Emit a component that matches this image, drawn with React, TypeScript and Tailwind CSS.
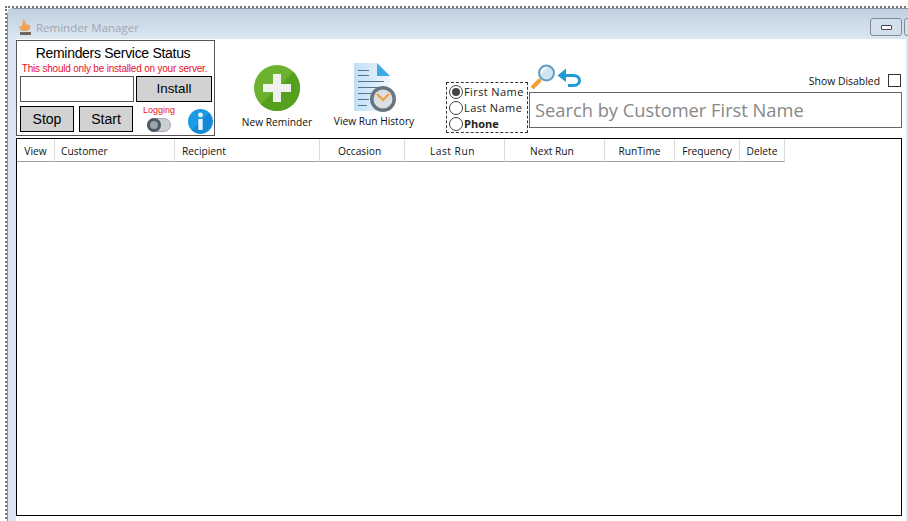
import React from "react";

const cols: [string, number, string][] = [
  ["View", 38, "text-center"],
  ["Customer", 120, "pl-[6px]"],
  ["Recipient", 145, "pl-[7px]"],
  ["Occasion", 85, "pl-[18px]"],
  ["Last Run", 100, "pl-[25px] tracking-[0.5px]"],
  ["Next Run", 100, "pl-[25px]"],
  ["RunTime", 70, "text-center"],
  ["Frequency", 65, "text-center"],
  ["Delete", 45, "text-center"],
];

function Radio({ label, checked, bold }: { label: string; checked?: boolean; bold?: boolean }) {
  return (
    <div className="flex items-center h-[16px]">
      <span className="w-[14px] h-[14px] rounded-full border border-[#444] bg-white flex items-center justify-center shrink-0">
        {checked && <span className="w-[8px] h-[8px] rounded-full bg-[#444]" />}
      </span>
      <span className={`ml-[1px] text-[11px] text-[#222] ${bold ? "font-bold tracking-normal" : "tracking-[0.4px]"}`}>{label}</span>
    </div>
  );
}

function Flame() {
  return (
    <svg width="16" height="18" viewBox="0 0 16 18" className="shrink-0">
      <path d="M6 1C8 2 9 4 8.500 6L13 7C14 9 13 12 10 13H5C3 12 2 10 2 8L4.500 8.500C5 6 6.500 4 6 1Z" fill="#f2a45f" />
      <rect x="3" y="14" width="11" height="3" fill="#6f665e" />
    </svg>
  );
}

function Plus() {
  return (
    <svg width="46" height="46" viewBox="0 0 46 46" className="block">
      <circle cx="23" cy="23" r="23" fill="#6cb22e" />
      <path d="M39.300 6.700A23 23 0 0 1 6.700 39.300Z" fill="#55a01f" />
      <path d="M19 9h8v10h10v8H27v10h-8V27H9v-8h10z" fill="#f0f1ee" />
    </svg>
  );
}

function History() {
  return (
    <svg width="44" height="49" viewBox="0 0 44 49" className="block">
      <defs>
        <linearGradient id="doc" x1="0" x2="1" y1="0" y2="0">
          <stop offset="0" stopColor="#bfe0f6" />
          <stop offset="1" stopColor="#eef6fc" />
        </linearGradient>
      </defs>
      <path d="M1 0H24L37 13V48H1Z" fill="url(#doc)" />
      <path d="M24 0L37 13H24Z" fill="#3fa9e6" />
      <g stroke="#5b7186" strokeWidth="1">
        <path d="M5 7.500H16M5 12.500H16M5 18.500H31M5 24.500H31M5 30.500H18M5 36.500H16M5 42.500H14" />
      </g>
      <circle cx="30" cy="36" r="13" fill="#68757f" />
      <circle cx="30" cy="36" r="9.500" fill="#dcdfe2" />
      <path d="M24 31L30 37L36 31" stroke="#f0a030" strokeWidth="2.200" fill="none" />
    </svg>
  );
}

function Magnifier() {
  return (
    <svg width="26" height="26" viewBox="0 0 26 26" className="block">
      <path d="M2 24L10.500 15.500" stroke="#f0a030" strokeWidth="4" />
      <circle cx="16.500" cy="9" r="7.500" fill="#cfe6f2" stroke="#5f9fbd" strokeWidth="2" />
      <path d="M12 8.500A5 5 0 0 1 16.500 4" stroke="#fff" strokeWidth="2" fill="none" />
    </svg>
  );
}

function Back() {
  return (
    <svg width="25" height="20" viewBox="0 0 25 20" className="block">
      <path d="M9 0.500L0.500 7.500L9 14Z" fill="#1f9ad6" />
      <path d="M7 7.500H16.500C24.500 7.500 24.500 17.500 16.500 17.500H11" stroke="#1f9ad6" strokeWidth="3" fill="none" />
    </svg>
  );
}

function Info() {
  return (
    <svg width="25" height="25" viewBox="0 0 25 25" className="block">
      <circle cx="12.500" cy="12.500" r="12.500" fill="#1b9be4" />
      <path d="M21.300 3.700A12.500 12.500 0 0 1 3.700 21.300Z" fill="#1488d4" />
      <circle cx="12.500" cy="6" r="2.400" fill="#e6f3fb" />
      <path d="M10.300 10H14.700V21H10.300Z" fill="#e6f3fb" />
    </svg>
  );
}

export default function App() {
  return (
    <div className="w-[908px] h-[521px] overflow-hidden bg-white pl-[5px] pt-[6px] font-['Liberation_Sans',sans-serif]">
      <div className="w-[920px] h-[520px] border-l-2 border-t-2 border-dotted border-[#777]">
        <div className="h-full rounded-tl-[7px] bg-[#dbe6f2] border-l border-t border-[#8a96a3]">
          {/* Title bar */}
          <div className="h-[30px] flex bg-gradient-to-b from-[#c0d0df] to-[#dce7f3] pl-[9px] pr-[13px]">
            <div className="mt-[9px]"><Flame /></div>
            <span className="ml-[3px] mt-[11px] text-[11.5px] leading-[16px] text-[#a0a7ae] font-['Open_Sans',sans-serif]">Reminder Manager</span>
            <div className="ml-auto mt-[9px] flex gap-[2px] items-start">
              <div className="w-[32px] h-[18px] rounded-[3px] border border-[#7e8c9a] bg-[#d3e0ec] flex items-center justify-center">
                <span className="w-[11px] h-[5px] border border-[#445] rounded-[1px] bg-white" />
              </div>
              <div className="w-[8px] h-[18px] rounded-l-[3px] border border-[#7e8c9a] bg-[#d3e0ec]" />
            </div>
          </div>
          {/* Client */}
          <div className="ml-[8px] w-[890px] h-[490px] bg-white">
            <div className="flex h-[99px]">
              {/* Service box */}
              <div className="mt-[1px] w-[199px] h-[96px] border border-[#555] px-[3px] shrink-0">
                <div className="text-center text-[14px] tracking-[-0.3px] leading-[16px] mt-[4px] mr-[5px] text-black whitespace-nowrap">Reminders Service Status</div>
                <div className="text-center text-[10px] tracking-[-0.2px] leading-[12px] mt-[2px] mr-[2px] text-[#e8102a] whitespace-nowrap">This should only be installed on your server.</div>
                <div className="flex mt-[1px] gap-[2px]">
                  <div className="w-[114px] h-[26px] border border-[#555] bg-white shrink-0" />
                  <div className="w-[76px] h-[26px] border border-black bg-[#d2d2d2] text-[13.4px] flex items-center justify-center shrink-0">Install</div>
                </div>
                <div className="flex mt-[4px]">
                  <div className="w-[54px] h-[26px] border border-black bg-[#d2d2d2] text-[14px] flex items-center justify-center shrink-0">Stop</div>
                  <div className="ml-[5px] w-[54px] h-[26px] border border-black bg-[#d2d2d2] text-[14px] flex items-center justify-center shrink-0">Start</div>
                  <div className="ml-[10px] w-[32px] flex flex-col items-center shrink-0">
                    <span className="text-[9px] leading-[11px] -mt-[1px] text-[#e8102a]">Logging</span>
                    <span className="mt-[2px] w-[24px] h-[14px] rounded-full bg-[#c9cfd2] border border-[#aab] relative">
                      <span className="absolute -left-[1px] -top-[1px] w-[14px] h-[14px] rounded-full border-[3px] border-[#4d5a62] bg-[#9aa4aa]" />
                    </span>
                  </div>
                  <div className="ml-[13px] mt-[3px] shrink-0"><Info /></div>
                </div>
              </div>
              {/* New reminder */}
              <div className="ml-[26px] w-[72px] flex flex-col items-center pt-[26px] font-['Open_Sans',sans-serif]">
                <Plus />
                <span className="mt-[4px] text-[10.2px] leading-[14px] text-[#111] whitespace-nowrap">New Reminder</span>
              </div>
              {/* History */}
              <div className="ml-[20px] w-[84px] flex flex-col items-center pt-[24px] font-['Open_Sans',sans-serif]">
                <History />
                <span className="mt-[2px] mr-[2px] text-[10.2px] leading-[14px] text-[#111] whitespace-nowrap">View Run History</span>
              </div>
              {/* Radios */}
              <div className="ml-[29px] mt-[43px] w-[82px] h-[51px] border border-dashed border-[#333] pl-[2px] pt-[1px] font-['Open_Sans',sans-serif] shrink-0">
                <Radio label="First Name" checked />
                <Radio label="Last Name" />
                <Radio label="Phone" bold />
              </div>
              {/* Search */}
              <div className="flex flex-col w-[373px] shrink-0 ml-px">
                <div className="flex h-[53px]">
                  <div className="mt-[25px] ml-[1px]"><Magnifier /></div>
                  <div className="mt-[29px] ml-[1px]"><Back /></div>
                  <div className="ml-auto mr-[1px] mt-[35px] flex h-[18px] items-start">
                    <span className="text-[10.4px] leading-[14px] font-['Open_Sans',sans-serif] text-[#111] mr-[8px]">Show Disabled</span>
                    <span className="w-[13px] h-[13px] border border-[#333] bg-white" />
                  </div>
                </div>
                <div className="h-[36px] border border-[#666] flex items-center pl-[5px] text-[18.3px] text-[#888] font-['Open_Sans',sans-serif] whitespace-nowrap">
                  Search by Customer First Name
                </div>
              </div>
            </div>
            {/* Table */}
            <div className="w-[886px] h-[378px] border border-black">
              <div className="flex h-[23px]">
                {cols.map(([name, w, cls]) => (
                  <div
                    key={name}
                    style={{ width: w }}
                    className={`${cls} shrink-0 h-[23px] pt-[1px] border-r border-b border-r-[#dcdcdc] border-b-[#a0a0a0] text-[10.2px] leading-[22px] text-[#111] font-['Open_Sans',sans-serif] whitespace-nowrap`}
                  >
                    {name}
                  </div>
                ))}
              </div>
            </div>
          </div>
        </div>
      </div>
    </div>
  );
}
